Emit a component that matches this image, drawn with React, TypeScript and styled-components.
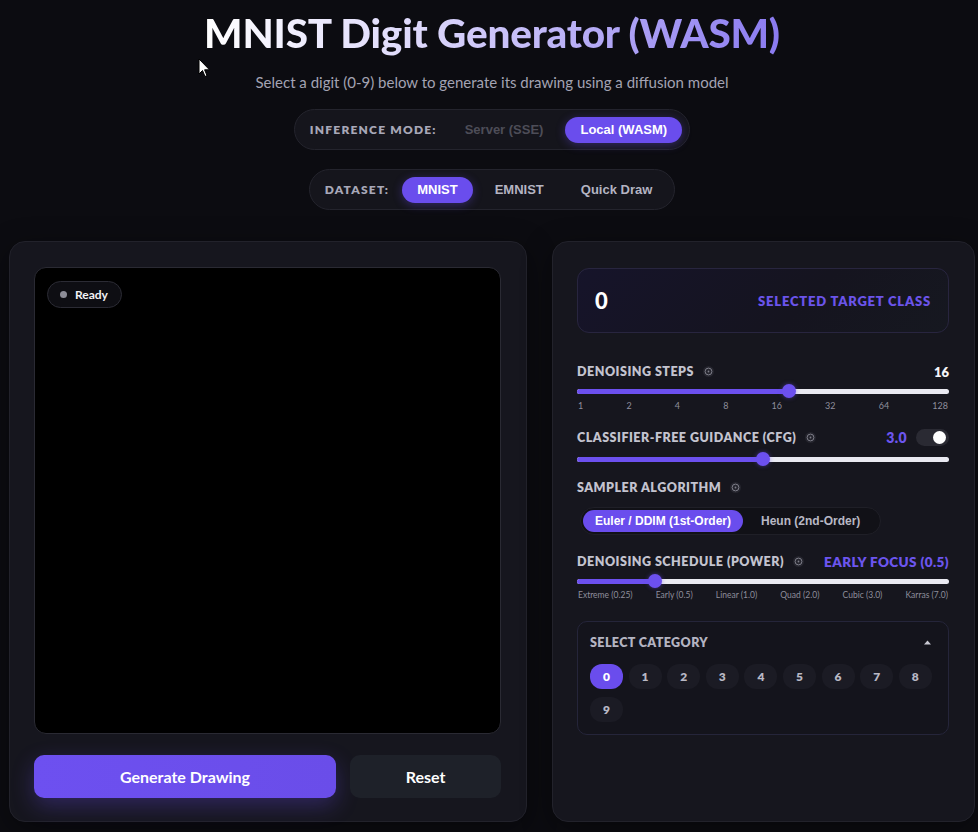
import React from "react";
import styled, { createGlobalStyle } from "styled-components";

const GlobalStyle = createGlobalStyle`
  * { box-sizing: border-box; }
  html, body { margin: 0; padding: 0; background: #0c0c11; }
  body { font-family: Lato, "Noto Sans", sans-serif; color: #e8e8f0; }
`;

const Page = styled.div`
  position: relative;
  width: 978px;
  min-height: 832px;
  padding: 0 3px 10px 9px;
  display: flex;
  flex-direction: column;
  align-items: center;
  background: #0c0c11;
`;

const Title = styled.h1`
  margin: 10px 0 0;
  font-family: Lato, sans-serif;
  font-weight: 900;
  font-size: 40.5px;
  line-height: 46px;
  letter-spacing: -0.2px;
  background: linear-gradient(90deg, #ffffff 0%, #dcd7fb 38%, #8a7af0 100%);
  -webkit-background-clip: text;
  background-clip: text;
  color: transparent;
`;

const Subtitle = styled.p`
  margin: 16px 0 0;
  font-size: 15px;
  line-height: 20px;
  color: #a3a3b3;
`;

const Pill = styled.div<{ $mt: number }>`
  margin-top: ${(p) => p.$mt}px;
  height: 41px;
  flex-shrink: 0;
  display: flex;
  align-items: center;
  gap: 7px;
  padding: 0 7px 0 15px;
  border-radius: 999px;
  background: #15151c;
  border: 1px solid #24242d;
`;

const PillLabel = styled.span`
  font-size: 12px;
  font-weight: 800;
  letter-spacing: 1.2px;
  color: #a8a8b8;
  margin-right: 6px;
`;

const PillButton = styled.button<{ $active?: boolean; $muted?: boolean }>`
  height: 26px;
  padding: 0 15px;
  border: none;
  border-radius: 999px;
  font-family: "Liberation Sans", Arial, sans-serif;
  font-weight: 700;
  font-size: 13px;
  background: ${(p) => (p.$active ? "#6a4ded" : "transparent")};
  color: ${(p) => (p.$active ? "#ffffff" : p.$muted ? "#4d4d58" : "#b4b4c2")};
  box-shadow: ${(p) => (p.$active ? "0 2px 10px rgba(106,77,237,0.35)" : "none")};
`;

const Main = styled.div`
  margin-top: 31px;
  display: grid;
  grid-template-columns: 518px 423px;
  gap: 25px;
  width: 966px;
`;

const Panel = styled.section`
  background: #16161e;
  border: 1px solid #22222b;
  border-radius: 16px;
  box-shadow: 0 8px 30px rgba(0, 0, 0, 0.4);
`;

const LeftPanel = styled(Panel)`
  padding: 25px 25px 23px 24px;
  display: flex;
  flex-direction: column;
  gap: 21px;
`;

const Canvas = styled.div`
  position: relative;
  height: 467px;
  background: #000;
  border: 1px solid #2a2a33;
  border-radius: 12px;
`;

const Badge = styled.div`
  position: absolute;
  top: 13px;
  left: 12px;
  height: 27px;
  padding: 0 13px 0 12px;
  display: flex;
  align-items: center;
  gap: 8px;
  border-radius: 999px;
  background: #0e0e13;
  border: 1px solid #2b2b34;
  font-size: 12px;
  font-weight: 700;
  color: #f2f2f6;
`;

const Dot = styled.span`
  width: 7px;
  height: 7px;
  border-radius: 50%;
  background: #8d8d98;
`;

const ButtonRow = styled.div`
  display: grid;
  grid-template-columns: 302px 151px;
  gap: 14px;
`;

const PrimaryButton = styled.button`
  height: 43px;
  border: none;
  border-radius: 10px;
  background: linear-gradient(90deg, #6d50f0, #6a4de9);
  color: #fff;
  font-family: Lato, sans-serif;
  font-weight: 700;
  font-size: 16px;
  box-shadow: 0 8px 22px rgba(106, 77, 237, 0.3);
`;

const SecondaryButton = styled.button`
  height: 43px;
  border: none;
  border-radius: 10px;
  background: #1e2129;
  color: #fff;
  font-family: Lato, sans-serif;
  font-weight: 700;
  font-size: 16px;
`;

const RightPanel = styled(Panel)`
  padding: 26px 25px 25px 24px;
  display: flex;
  flex-direction: column;
`;

const TargetCard = styled.div`
  height: 65px;
  display: flex;
  align-items: center;
  justify-content: space-between;
  padding: 0 17px 0 17px;
  border-radius: 12px;
  background: linear-gradient(135deg, #16142a 0%, #15141f 60%, #161820 100%);
  border: 1px solid #28253f;
`;

const TargetDigit = styled.span`
  font-size: 22px;
  font-weight: 900;
  color: #fff;
`;

const TargetLabel = styled.span`
  font-size: 13px;
  font-weight: 800;
  letter-spacing: 0.8px;
  color: #6b54ea;
`;

const Group = styled.div<{ $mt: number }>`
  margin-top: ${(p) => p.$mt}px;
  display: flex;
  flex-direction: column;
`;

const Header = styled.div`
  height: 17px;
  display: flex;
  align-items: center;
  justify-content: space-between;
`;

const LabelWrap = styled.div`
  display: flex;
  align-items: center;
  gap: 9px;
`;

const Label = styled.span`
  font-size: 12.5px;
  font-weight: 800;
  letter-spacing: 0.5px;
  color: #c3c3cf;
`;

const HeaderRight = styled.div`
  display: flex;
  align-items: center;
  gap: 9px;
`;

const Value = styled.span<{ $accent?: boolean; $size?: number }>`
  font-size: ${(p) => p.$size ?? 13}px;
  font-weight: 800;
  letter-spacing: ${(p) => (p.$accent ? 0.4 : 0)}px;
  color: ${(p) => (p.$accent ? "#6c55ee" : "#f4f4f8")};
`;

const Toggle = styled.div`
  width: 33px;
  height: 17px;
  border-radius: 9px;
  background: #2a2a33;
  display: flex;
  align-items: center;
  justify-content: flex-end;
  padding: 0 3px;
`;

const Knob = styled.span`
  width: 13px;
  height: 13px;
  border-radius: 50%;
  background: #fff;
`;

const SliderBox = styled.div<{ $mt: number }>`
  position: relative;
  margin-top: ${(p) => p.$mt}px;
  height: 16px;
  display: flex;
  align-items: center;
`;

const Track = styled.div`
  position: relative;
  width: 100%;
  height: 5px;
  border-radius: 3px;
  background: #e9e9f1;
`;

const Fill = styled.div`
  height: 100%;
  border-radius: 3px;
  background: #6c50ef;
`;

const Thumb = styled.span`
  position: absolute;
  top: 50%;
  width: 14px;
  height: 14px;
  margin: -7px 0 0 -7px;
  border-radius: 50%;
  background: #6c50ef;
  box-shadow: 0 0 4px rgba(108, 80, 239, 0.5);
`;

const Ticks = styled.div<{ $size: number }>`
  margin-top: 1px;
  height: 10px;
  display: flex;
  justify-content: space-between;
  align-items: center;
  font-size: ${(p) => p.$size}px;
  color: #8e8e9c;
  padding: 0 1px;
`;

const Segment = styled.div`
  margin-top: 11px;
  align-self: flex-start;
  margin-left: 3px;
  height: 28px;
  display: flex;
  align-items: center;
  gap: 2px;
  padding: 0 8px 0 2px;
  border-radius: 999px;
  background: #111117;
  border: 1px solid #1f1f27;
`;

const SegButton = styled.button<{ $active?: boolean }>`
  height: 22px;
  padding: 0 12px;
  border: none;
  border-radius: 999px;
  font-family: "Liberation Sans", Arial, sans-serif;
  font-weight: 700;
  font-size: 12px;
  background: ${(p) => (p.$active ? "#6a4ded" : "transparent")};
  color: ${(p) => (p.$active ? "#fff" : "#b8b8c4")};
  margin-left: ${(p) => (p.$active ? 0 : 4)}px;
`;

const CategoryBox = styled.div`
  margin-top: 21px;
  padding: 13px 13px 12px 12px;
  border-radius: 10px;
  background: #14141c;
  border: 1px solid #25253a;
`;

const CategoryHeader = styled.div`
  height: 15px;
  display: flex;
  align-items: center;
  justify-content: space-between;
  padding-right: 4px;
`;

const CategoryTitle = styled.span`
  font-size: 12.5px;
  font-weight: 800;
  letter-spacing: 0.4px;
  color: #b4b4c2;
`;

const Chips = styled.div`
  margin-top: 14px;
  display: flex;
  flex-wrap: wrap;
  gap: 8px 5.6px;
`;

const Chip = styled.button<{ $active?: boolean }>`
  width: 33px;
  height: 25px;
  border: none;
  border-radius: 12px;
  font-family: Lato, sans-serif;
  font-weight: 800;
  font-size: 12px;
  background: ${(p) => (p.$active ? "#6a4ded" : "#1b1b24")};
  color: ${(p) => (p.$active ? "#fff" : "#b8b8c4")};
`;

const Cursor = styled.svg`
  position: absolute;
  left: 198px;
  top: 58px;
`;

const InfoIcon = () => (
  <svg width="11" height="11" viewBox="0 0 11 11">
    <circle cx="5.5" cy="5.5" r="5.5" fill="#25252e" />
    <circle cx="5.5" cy="5.5" r="3.4" fill="none" stroke="#7d7d88" strokeWidth="1" />
    <circle cx="5.5" cy="5.5" r="0.9" fill="#7d7d88" />
  </svg>
);

const Slider = ({ pct, mt }: { pct: number; mt: number }) => (
  <SliderBox $mt={mt}>
    <Track>
      <Fill style={{ width: `${pct}%` }} />
    </Track>
    <Thumb style={{ left: `${pct}%` }} />
  </SliderBox>
);

export default function App() {
  const steps = ["1", "2", "4", "8", "16", "32", "64", "128"];
  const schedule = ["Extreme (0.25)", "Early (0.5)", "Linear (1.0)", "Quad (2.0)", "Cubic (3.0)", "Karras (7.0)"];
  const digits = ["0", "1", "2", "3", "4", "5", "6", "7", "8", "9"];
  return (
    <>
      <GlobalStyle />
      <Page>
        <Title>MNIST Digit Generator (WASM)</Title>
        <Subtitle>Select a digit (0-9) below to generate its drawing using a diffusion model</Subtitle>

        <Pill $mt={17}>
          <PillLabel>INFERENCE MODE:</PillLabel>
          <PillButton $muted>Server (SSE)</PillButton>
          <PillButton $active>Local (WASM)</PillButton>
        </Pill>

        <Pill $mt={19}>
          <PillLabel>DATASET:</PillLabel>
          <PillButton $active>MNIST</PillButton>
          <PillButton>EMNIST</PillButton>
          <PillButton>Quick Draw</PillButton>
        </Pill>

        <Main>
          <LeftPanel>
            <Canvas>
              <Badge>
                <Dot />
                Ready
              </Badge>
            </Canvas>
            <ButtonRow>
              <PrimaryButton>Generate Drawing</PrimaryButton>
              <SecondaryButton>Reset</SecondaryButton>
            </ButtonRow>
          </LeftPanel>

          <RightPanel>
            <TargetCard>
              <TargetDigit>0</TargetDigit>
              <TargetLabel>SELECTED TARGET CLASS</TargetLabel>
            </TargetCard>

            <Group $mt={30}>
              <Header>
                <LabelWrap>
                  <Label>DENOISING STEPS</Label>
                  <InfoIcon />
                </LabelWrap>
                <Value>16</Value>
              </Header>
              <Slider pct={57} mt={3} />
              <Ticks $size={9}>
                {steps.map((s) => (
                  <span key={s}>{s}</span>
                ))}
              </Ticks>
            </Group>

            <Group $mt={19}>
              <Header>
                <LabelWrap>
                  <Label>CLASSIFIER-FREE GUIDANCE (CFG)</Label>
                  <InfoIcon />
                </LabelWrap>
                <HeaderRight>
                  <Value $accent $size={14}>3.0</Value>
                  <Toggle>
                    <Knob />
                  </Toggle>
                </HeaderRight>
              </Header>
              <Slider pct={50} mt={5} />
            </Group>

            <Group $mt={12}>
              <Header>
                <LabelWrap>
                  <Label>SAMPLER ALGORITHM</Label>
                  <InfoIcon />
                </LabelWrap>
              </Header>
              <Segment>
                <SegButton $active>Euler / DDIM (1st-Order)</SegButton>
                <SegButton>Heun (2nd-Order)</SegButton>
              </Segment>
            </Group>

            <Group $mt={18}>
              <Header>
                <LabelWrap>
                  <Label>DENOISING SCHEDULE (POWER)</Label>
                  <InfoIcon />
                </LabelWrap>
                <Value $accent $size={13.5}>EARLY FOCUS (0.5)</Value>
              </Header>
              <Slider pct={21} mt={3} />
              <Ticks $size={8.5}>
                {schedule.map((s) => (
                  <span key={s}>{s}</span>
                ))}
              </Ticks>
            </Group>

            <CategoryBox>
              <CategoryHeader>
                <CategoryTitle>SELECT CATEGORY</CategoryTitle>
                <svg width="7" height="5" viewBox="0 0 7 5">
                  <path d="M0 4.5 L3.5 0.5 L7 4.5 Z" fill="#c8c8d2" />
                </svg>
              </CategoryHeader>
              <Chips>
                {digits.map((d) => (
                  <Chip key={d} $active={d === "0"}>
                    {d}
                  </Chip>
                ))}
              </Chips>
            </CategoryBox>
          </RightPanel>
        </Main>

        <Cursor width="13" height="20" viewBox="0 0 13 20">
          <path d="M1 1 L1 16 L4.5 12.5 L7 18.5 L9 17.6 L6.6 11.8 L11.5 11.8 Z" fill="#fff" stroke="#000" strokeWidth="1" />
        </Cursor>
      </Page>
    </>
  );
}
